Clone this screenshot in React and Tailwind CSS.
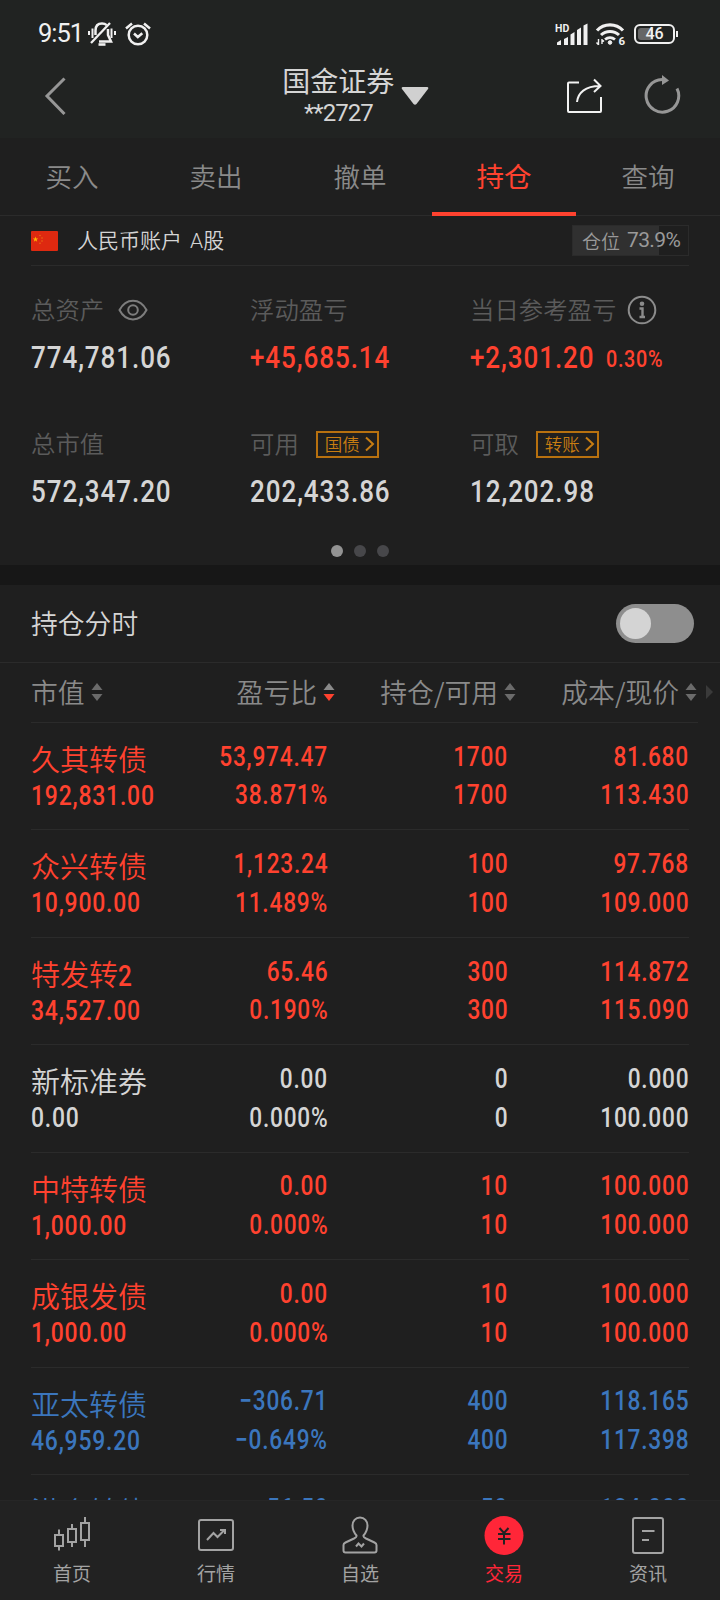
import React, { useState } from 'react';
import clsx from 'clsx';

const TABS = ['买入', '卖出', '撤单', '持仓', '查询'];

const HOLDINGS = [
    { name: '久其转债', value: '192,831.00', profit: '53,974.47', ratio: '38.871%', qty: '1700', usable: '1700', cost: '81.680', price: '113.430', trend: 'up' },
    { name: '众兴转债', value: '10,900.00', profit: '1,123.24', ratio: '11.489%', qty: '100', usable: '100', cost: '97.768', price: '109.000', trend: 'up' },
    { name: '特发转', suffix: '2', value: '34,527.00', profit: '65.46', ratio: '0.190%', qty: '300', usable: '300', cost: '114.872', price: '115.090', trend: 'up' },
    { name: '新标准券', value: '0.00', profit: '0.00', ratio: '0.000%', qty: '0', usable: '0', cost: '0.000', price: '100.000', trend: 'flat' },
    { name: '中特转债', value: '1,000.00', profit: '0.00', ratio: '0.000%', qty: '10', usable: '10', cost: '100.000', price: '100.000', trend: 'up' },
    { name: '成银发债', value: '1,000.00', profit: '0.00', ratio: '0.000%', qty: '10', usable: '10', cost: '100.000', price: '100.000', trend: 'up' },
    { name: '亚太转债', value: '46,959.20', profit: '−306.71', ratio: '−0.649%', qty: '400', usable: '400', cost: '118.165', price: '117.398', trend: 'down' },
    { name: '洪合转债', profit: '56.50', qty: '50', cost: '124.000', trend: 'down' }
];

const TREND_COLORS = {
    up: 'text-[#ff422f]',
    flat: 'text-[#d5d5d5]',
    down: 'text-[#3b76bd]'
};

// Condensed figures used for every amount
const Num = ({ children, right, className }) => (
    <span
        className={clsx(
            "inline-block font-['Roboto'] font-medium tracking-[0.035em] whitespace-nowrap",
            right ? 'origin-right scale-x-[0.83]' : 'origin-left scale-x-[0.84]',
            className
        )}
    >
        {children}
    </span>
);

const StatusBar = () => (
    <div className="flex h-[66px] items-center justify-between pt-[2px] pl-[38px] pr-[42px] text-[#f0f0f0]">
        <div className="flex items-center">
            <span className="w-[49px] font-['Roboto'] text-[25.500px] font-[450] leading-none tracking-[-0.04em]">9:51</span>
            <svg width="30" height="26" viewBox="0 0 30 26" fill="none" stroke="currentColor" strokeWidth="2">
                <path d="M2 10v4M5.500 7.500v9.500M28 10v4M24.500 7.500v9.500" />
                <path d="M8.500 14V9.500C8.500 5.500 10.500 2.500 15 2.500c2 0 3.500.5 4.700 1.600M21 8v6l3 6.500H12" strokeWidth="2.500" />
                <path d="M4 22L23 2" strokeWidth="2.300" />
                <path d="M11.500 23.500h7" strokeWidth="2.600" />
            </svg>
            <svg className="ml-2" width="26" height="24" viewBox="0 0 26 24" fill="none" stroke="currentColor" strokeWidth="2.500">
                <circle cx="13" cy="13" r="9.300" />
                <path d="M1 6.500L7 1.500M25 6.500L19 1.500M9 11.500l3.800 3.500 4.500-3.800" />
            </svg>
        </div>
        <div className="flex items-center">
            <svg width="33" height="22" viewBox="0 0 33 22" fill="currentColor">
                <path d="M2 19.500l4-2.500v5H2zM9 16l4-2v8H9zM15.500 11.500l4-2.500v13h-4zM22 7l4-2.500V22h-4zM28.500 2.500l4-2V22h-4z" />
                <text x="0" y="8.500" fontSize="10.500" fontWeight="700" fontFamily="Roboto">HD</text>
            </svg>
            <svg className="ml-[7px]" width="32" height="24" viewBox="0 0 32 24" fill="none" stroke="currentColor">
                <path d="M2 8.500a18 18 0 0 1 26 0" strokeWidth="3.200" />
                <path d="M6 13a13 13 0 0 1 18 0" strokeWidth="3" />
                <path d="M10 17.500a8 8 0 0 1 10 0" strokeWidth="2.800" />
                <circle cx="15" cy="20.500" r="1.800" fill="currentColor" />
                <path d="M3.500 17v6M1.500 20.500l2 2.200M7 22v-5M7 17.500l2 2" strokeWidth="1.400" />
                <text x="23.500" y="23" fontSize="11.500" fontWeight="700" fontFamily="Roboto" fill="currentColor" stroke="none">6</text>
            </svg>
            <div className="ml-[7px] flex h-[20px] w-[41px] items-center rounded-[6px] border-2 border-current p-[2px]">
                <div className="flex h-full w-[15px] items-center rounded-l-[3px] bg-[#666]">
                    <span className="w-[33px] shrink-0 text-center font-['Roboto'] text-[16px] font-medium leading-[20px]">46</span>
                </div>
            </div>
            <div className="ml-[1px] h-[6px] w-[2px] bg-current" />
        </div>
    </div>
);

const TitleBar = () => (
    <div className="grid h-[72px] grid-cols-3 pl-[44px] pr-[39px]">
        <svg className="mt-[11px]" width="24" height="38" viewBox="0 0 24 38" fill="none" stroke="#969696" strokeWidth="3">
            <path d="M20.500 1.500L3 19l17.500 18" />
        </svg>
        <div className="flex items-start">
            <div className="ml-[26px] -mt-[2px] text-center text-[#d5d5d5]">
                <div className="whitespace-nowrap text-[28px] leading-[32px]">国金证券</div>
                <div className="font-['Roboto'] text-[24px] font-normal leading-[34px] tracking-[-0.04em]">**2727</div>
            </div>
            <svg className="ml-[7px] mt-[21px] shrink-0" width="28" height="18" viewBox="0 0 28 18" fill="#d0d0d0">
                <path d="M2 0h24q2 0 1 2L15.500 17q-1.500 1.500-3 0L1 2Q0 0 2 0z" />
            </svg>
        </div>
        <div className="flex justify-end pt-[8px]">
            <svg width="38" height="40" viewBox="0 0 38 40" fill="none" stroke="#f2f2f2" strokeWidth="2">
                <path d="M13 8.500H3q-1 0-1 1V37q0 1 1 1h31q1 0 1-1V23" />
                <path d="M11 28C12 19 19 12 34 12M28 5.500l6.500 6.500-6.500 6" />
            </svg>
            <svg className="ml-[39px]" width="38" height="40" viewBox="0 0 38 40" fill="none" stroke="#969696" strokeWidth="3">
                <path d="M19 5.500A16.300 16.300 0 1 0 34 14.500" />
                <path d="M19 1l7 5.500-7 4.500z" fill="#969696" stroke="none" />
            </svg>
        </div>
    </div>
);

const SortIcon = ({ active }) => (
    <svg className="-mt-[2px] shrink-0" width="12" height="18" viewBox="0 0 12 18">
        <path d="M6 0l5.500 7H.5z" fill={active ? '#8a8a8a' : '#6b6b6b'} />
        <path d="M6 18l5.500-7H.5z" fill={active ? '#ff422f' : '#6b6b6b'} />
    </svg>
);

const TagButton = ({ label }) => (
    <span className="ml-[17px] flex h-[27px] w-[63px] items-center border-2 border-[#b8710f] pl-[7px] text-[#c87d12]">
        <span className="text-[17.500px] font-[350] leading-none">{label}</span>
        <svg className="ml-[5px] shrink-0" width="10" height="16" viewBox="0 0 10 16" fill="none" stroke="currentColor" strokeWidth="2">
            <path d="M1 1.500L8 8l-7 6.500" />
        </svg>
    </span>
);

const Stat = ({ label, value, extra, color, children }) => (
    <div>
        <div className="flex h-[36px] items-center text-[24.400px] font-[350] text-[#5b5b5b]">
            <span className="-mt-[2px] whitespace-nowrap leading-none">{label}</span>
            {children}
        </div>
        <div className={clsx('mt-[5px] flex h-[49px] items-center leading-none', color || 'text-[#d5d5d5]')}>
            <Num className="text-[31px]">{value}</Num>
            {extra && <Num className="-ml-[12px] pt-[4px] text-[23.500px]">{extra}</Num>}
        </div>
    </div>
);

const Summary = () => (
    <section className="h-[349px]">
        <div className="mx-[31px] flex h-[50px] items-center border-b border-[#2b2b2b]">
            <svg width="27" height="20" viewBox="0 0 27 20">
                <rect width="27" height="20" rx="1" fill="#de2910" />
                <path d="M4.500 5.500l.7 2h2l-1.600 1.300.6 2-1.700-1.200-1.700 1.200.6-2L1.800 7.500h2z" fill="#ffb400" />
                <g fill="#e86a10">
                    <circle cx="9" cy="4.500" r=".8" />
                    <circle cx="11" cy="7" r=".8" />
                    <circle cx="11" cy="10" r=".8" />
                    <circle cx="9" cy="12.200" r=".8" />
                </g>
            </svg>
            <span className="ml-[19px] text-[21px] font-[350] text-[#d5d5d5]">人民币账户<span className="ml-[8px] font-['Roboto','Noto_Sans_CJK_SC']">A股</span></span>
            <div className="ml-auto flex h-[31px] w-[117px] border border-[#2b2b2b]">
                <div className="flex h-full w-[86px] items-center bg-[#303030] pl-[9px] text-[#9a9a9a]">
                    <span className="-mt-px shrink-0 text-[19px] font-[350] leading-none">仓位</span>
                    <span className="ml-[7px] shrink-0 font-['Roboto'] text-[21px] font-normal leading-none tracking-[-0.03em]">73.9%</span>
                </div>
            </div>
        </div>
        <div className="grid grid-cols-[219px_220px_1fr] gap-y-[44px] pl-[31px] pt-[26px]">
            <Stat label="总资产" value="774,781.06">
                <svg className="ml-[14px]" width="30" height="22" viewBox="0 0 30 22" fill="none" stroke="#7d7d7d" strokeWidth="2">
                    <path d="M1.500 11C8-1.500 22-1.500 28.500 11 22 23.500 8 23.500 1.500 11z" />
                    <circle cx="15" cy="11" r="4.800" />
                </svg>
            </Stat>
            <Stat label="浮动盈亏" value="+45,685.14" color="text-[#ff422f]" />
            <Stat label="当日参考盈亏" value="+2,301.20" extra="0.30%" color="text-[#ff422f]">
                <svg className="ml-[11px]" width="30" height="30" viewBox="0 0 30 30" fill="none" stroke="#8c8c8c" strokeWidth="2">
                    <circle cx="15" cy="15" r="13.300" />
                    <circle cx="15" cy="8.800" r="2.300" fill="#8c8c8c" stroke="none" />
                    <path d="M12.500 13.500h3V22M12.500 22h5.500" strokeWidth="2.400" />
                </svg>
            </Stat>
            <Stat label="总市值" value="572,347.20" />
            <Stat label="可用" value="202,433.86">
                <TagButton label="国债" />
            </Stat>
            <Stat label="可取" value="12,202.98">
                <TagButton label="转账" />
            </Stat>
        </div>
        <div className="mt-[29px] flex justify-center gap-[11px]">
            <span className="h-3 w-3 rounded-full bg-[#939393]" />
            <span className="h-3 w-3 rounded-full bg-[#47474a]" />
            <span className="h-3 w-3 rounded-full bg-[#47474a]" />
        </div>
    </section>
);

const HoldingRow = ({ item }) => (
    <div className={clsx('mx-[31px] grid h-[107.460px] shrink-0 grid-cols-[117px_180px_180px_181px] border-b border-[#2b2b2b]', TREND_COLORS[item.trend])}>
        <div className="pt-[17px]">
            <div className="h-[36px] whitespace-nowrap text-[29px] font-[350] leading-[36px]">
                {item.name}
                {item.suffix && <Num>{item.suffix}</Num>}
            </div>
            {item.value && <Num className="mt-[1px] text-[27.300px] leading-[38px]">{item.value}</Num>}
        </div>
        {[[item.profit, item.ratio], [item.qty, item.usable], [item.cost, item.price]].map(([top, bottom], i) => (
            <div key={i} className="flex flex-col items-end pt-[14.600px] text-[27.300px] leading-[38.700px]">
                <Num right>{top}</Num>
                {bottom && <Num right>{bottom}</Num>}
            </div>
        ))}
    </div>
);

const NAV_ITEMS = [
    {
        label: '首页',
        icon: (
            <g>
                <path d="M4 20h8v11H4zM8 14.500V20M8 31v4.500M17 14h8v13h-8zM21 9v5M21 27v5M30 8h8v17h-8zM34 2v6M34 25v7" />
            </g>
        )
    },
    {
        label: '行情',
        icon: (
            <g>
                <rect x="4" y="5" width="34" height="30" rx="2" />
                <path d="M12 25l6.500-7 4 4 6.500-6.500M25 15h5v4" />
            </g>
        )
    },
    {
        label: '自选',
        icon: (
            <g>
                <path d="M17.500 20.500C14.500 17 13.500 14 13.500 10.500C13.500 6 16.500 2.500 21 2.500S28.500 6 28.500 10.500C28.500 14 27.500 17 24.500 20.500C24 22 25 22.500 27 23.500L35.500 27.500Q37.500 28.500 37.500 30V35.500Q37.500 37.500 35.500 37.500H6.500Q4.500 37.500 4.500 35.500V30Q4.500 28.500 6.500 27.500L15 23.500C17 22.500 18 22 17.500 20.500z" />
                <path d="M17 31.500l2.500-3 3 3 2.500-3" />
            </g>
        )
    },
    {
        label: '交易',
        active: true,
        icon: (
            <g>
                <circle cx="21" cy="20.500" r="19.500" fill="#ff2638" stroke="none" />
                <path d="M16.500 13l4.500 5 4.500-5M15 19h12.500M15 24h12.500M21 18v11.500" stroke="#222" />
            </g>
        )
    },
    {
        label: '资讯',
        icon: (
            <g>
                <rect x="6" y="3" width="30" height="35" rx="2" />
                <path d="M15 16h12.500M15 25h7" />
            </g>
        )
    }
];

const BottomNav = () => (
    <nav className="grid h-[100px] shrink-0 grid-cols-5 border-t border-[#262626] bg-[#222222]">
        {NAV_ITEMS.map(({ label, icon, active }) => (
            <div key={label} className={clsx('flex flex-col items-center pt-[14px]', active ? 'text-[#ff2638]' : 'text-[#a3a3a3]')}>
                <svg width="42" height="42" viewBox="0 0 42 42" fill="none" stroke="currentColor" strokeWidth="2">{icon}</svg>
                <span className="mt-[2px] text-[19px] leading-[28px]">{label}</span>
            </div>
        ))}
    </nav>
);

const App = () => {
    const [activeTab, setActiveTab] = useState('持仓');
    const [showTrend, setShowTrend] = useState(false);

    return (
        <div className="flex h-[1600px] w-[720px] flex-col overflow-hidden bg-[#1f1f1f] font-['Noto_Sans_CJK_SC',sans-serif]">
            <header className="h-[138px] shrink-0 bg-[#212322]">
                <StatusBar />
                <TitleBar />
            </header>

            {/* Trade tabs */}
            <div className="grid h-[78px] shrink-0 grid-cols-5 border-b border-[#2b2b2b]">
                {TABS.map(tab => (
                    <button
                        key={tab}
                        onClick={() => setActiveTab(tab)}
                        className={clsx(
                            '-mb-px border-b-4 pt-[2px]',
                            activeTab === tab ? 'border-[#ff422f] text-[27.500px] font-normal text-[#ff422f]' : 'border-transparent text-[26.500px] font-[350] text-[#8a8a8a]'
                        )}
                    >
                        {tab}
                    </button>
                ))}
            </div>

            <Summary />
            <div className="h-[20px] shrink-0 bg-[#171717]" />

            {/* Intraday switch */}
            <div className="flex h-[78px] shrink-0 items-center justify-between border-b border-[#2b2b2b] pl-[31px] pr-[26px]">
                <span className="text-[26.800px] font-[350] text-[#d5d5d5]">持仓分时</span>
                <button
                    onClick={() => setShowTrend(!showTrend)}
                    className={clsx('flex h-[39px] w-[78px] rounded-full bg-[#8e8e8e] p-[4px]', showTrend && 'justify-end')}
                >
                    <span className="h-[31px] w-[31px] rounded-full bg-[#d4d4d4]" />
                </button>
            </div>

            {/* Table header */}
            <div className="ml-[31px] mr-[22px] grid h-[60px] shrink-0 grid-cols-[117px_187px_181px_182px] border-b border-[#2b2b2b] text-[26.800px] font-[350] text-[#8a8a8a]">
                <div className="flex items-center gap-[6px] whitespace-nowrap">市值<SortIcon /></div>
                <div className="flex items-center justify-end gap-[6px] whitespace-nowrap">盈亏比<SortIcon active /></div>
                <div className="flex items-center justify-end gap-[6px] whitespace-nowrap">持仓/可用<SortIcon /></div>
                <div className="flex items-center justify-end gap-[6px] whitespace-nowrap">
                    成本/现价<SortIcon />
                    <svg className="-ml-[1px] -mr-[16px] -mt-[2px] w-[12px] shrink-0" width="12" height="14" viewBox="0 0 12 14">
                        <path d="M4 0l7 7-7 7z" fill="#3a3a3a" />
                    </svg>
                </div>
            </div>

            <div className="min-h-0 flex-1 overflow-hidden">
                {HOLDINGS.map(item => (
                    <HoldingRow key={item.name} item={item} />
                ))}
            </div>

            <BottomNav />
        </div>
    );
};

export default App;
